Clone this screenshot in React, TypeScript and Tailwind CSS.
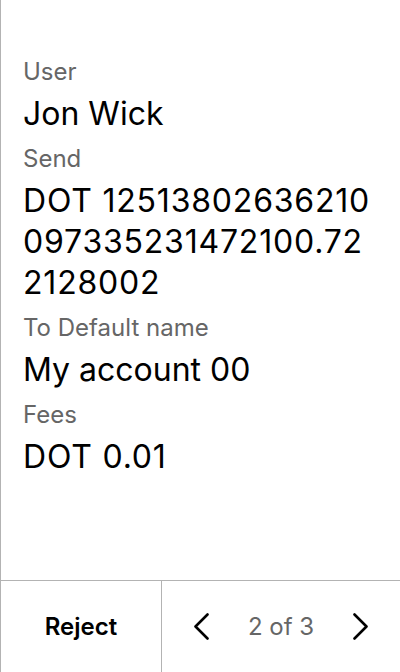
import React from 'react';

const items = [
  { label: 'User', value: 'Jon Wick', numeric: false },
  { label: 'Send', value: 'DOT 12513802636210097335231472100.722128002', numeric: true },
  { label: 'To Default name', value: 'My account 00', numeric: false },
  { label: 'Fees', value: 'DOT 0.01', numeric: true },
];

const Chevron: React.FC<{ dir: 'left' | 'right' }> = ({ dir }) => (
  <svg width="17" height="27" viewBox="0 0 17 27" fill="none">
    <path
      d={dir === 'left' ? 'M14.5 1.5 2.5 13.5l12 12' : 'M2.5 1.5l12 12-12 12'}
      stroke="#000"
      strokeWidth="2.6"
      strokeLinecap="round"
      strokeLinejoin="round"
    />
  </svg>
);

const App: React.FC = () => {
  return (
    <div className="w-[400px] h-[672px] bg-white border-l border-[#b3b3b3] flex flex-col font-['Inter',sans-serif] text-black">
      {/* Review fields */}
      <div className="flex-1 pt-[57px] pl-[22px] pr-[27px]">
        {items.map((item, index) => (
          <div key={index} className={index > 0 ? 'mt-[10px]' : ''}>
            <div className="text-[24px] leading-[30px] text-[#666666]">{item.label}</div>
            <div
              className={
                item.numeric
                  ? 'mt-[6px] text-[32px] leading-[41px] break-all tracking-[0.8px]'
                  : 'mt-[6px] text-[32px] leading-[41px] break-all'
              }
            >
              {item.value}
            </div>
          </div>
        ))}
      </div>

      {/* Footer actions */}
      <div className="h-[92px] border-t border-[#b3b3b3] flex">
        <button className="w-[160px] flex items-center justify-center text-[24px] font-semibold">
          Reject
        </button>
        <div className="flex-1 border-l border-[#b3b3b3] flex items-center justify-between pl-[31px] pr-[31px]">
          <Chevron dir="left" />
          <span className="text-[24px] text-[#666666]">2 of 3</span>
          <Chevron dir="right" />
        </div>
      </div>
    </div>
  );
};

export default App;
